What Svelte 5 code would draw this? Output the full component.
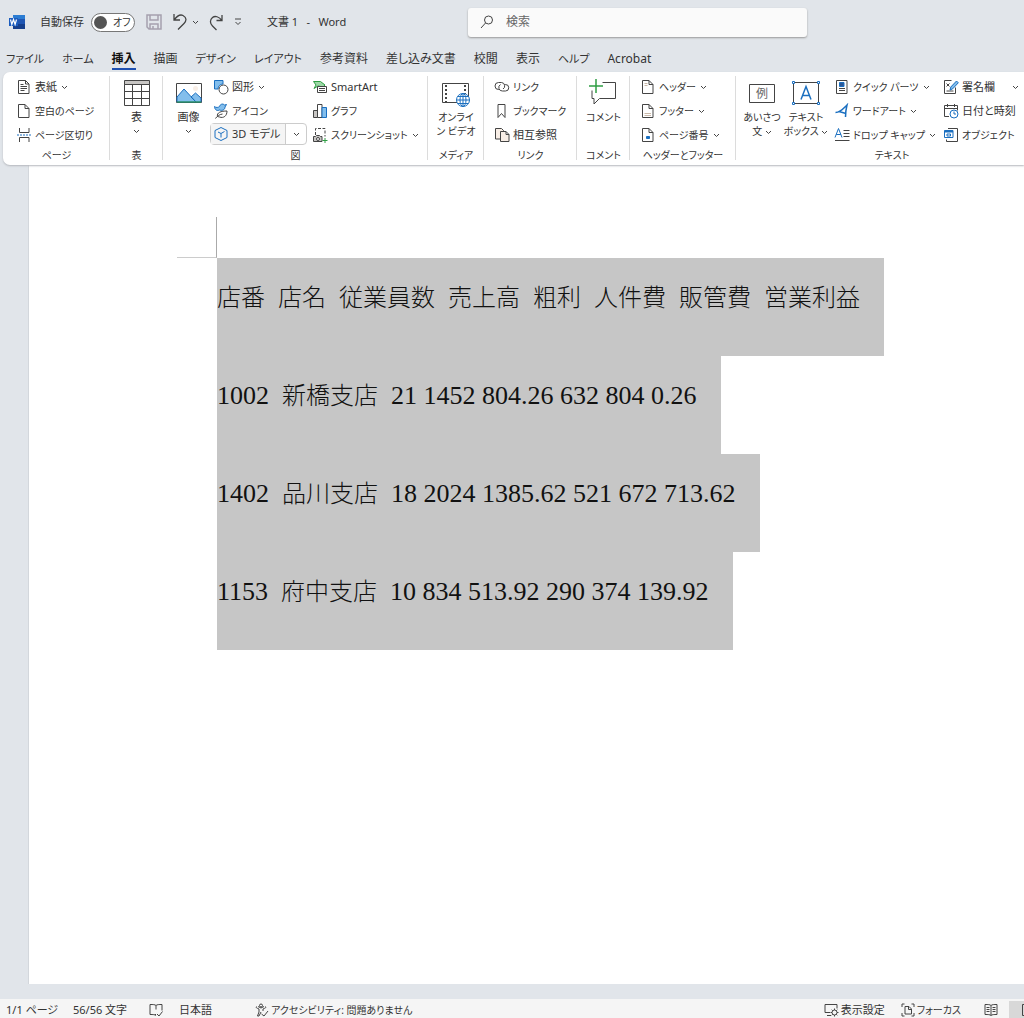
<script lang="ts">
  type Item = { icon: string; label: string; menu?: boolean };

  const tabs = [
    'ファイル', 'ホーム', '挿入', '描画', 'デザイン', 'レイアウト',
    '参考資料', '差し込み文書', '校閲', '表示', 'ヘルプ', 'Acrobat'
  ];
  let active = $state('挿入');
  let autosave = $state(false);

  // katakana labels are set one step smaller than kanji ones
  const isKana = (text: string) => /[ァ-ー]/.test(text);

  const pages: Item[] = [
    { icon: 'cover', label: '表紙', menu: true },
    { icon: 'blank', label: '空白のページ' },
    { icon: 'break', label: 'ページ区切り' }
  ];
  const charts: Item[] = [
    { icon: 'smartart', label: 'SmartArt' },
    { icon: 'chart', label: 'グラフ' },
    { icon: 'screenshot', label: 'スクリーンショット', menu: true }
  ];
  const links: Item[] = [
    { icon: 'link', label: 'リンク' },
    { icon: 'bookmark', label: 'ブックマーク' },
    { icon: 'crossref', label: '相互参照' }
  ];
  const headers: Item[] = [
    { icon: 'header', label: 'ヘッダー', menu: true },
    { icon: 'footer', label: 'フッター', menu: true },
    { icon: 'pagenum', label: 'ページ番号', menu: true }
  ];
  const parts: Item[] = [
    { icon: 'quick', label: 'クイック パーツ', menu: true },
    { icon: 'wordart', label: 'ワードアート', menu: true },
    { icon: 'dropcap', label: 'ドロップ キャップ', menu: true }
  ];
  const stamps: Item[] = [
    { icon: 'sign', label: '署名欄', menu: true },
    { icon: 'date', label: '日付と時刻' },
    { icon: 'object', label: 'オブジェクト' }
  ];

  const heading = ['店番', '店名', '従業員数', '売上高', '粗利', '人件費', '販管費', '営業利益'];
  const rows = [
    ['1002', '新橋支店', '21 1452 804.26 632 804 0.26'],
    ['1402', '品川支店', '18 2024 1385.62 521 672 713.62'],
    ['1153', '府中支店', '10 834 513.92 290 374 139.92']
  ];
</script>

{#snippet chevron()}
  <svg class="chev" width="7" height="5" viewBox="0 0 7 5" aria-hidden="true"><path d="M1 1l2.5 2.5L6 1" /></svg>
{/snippet}

{#snippet icon(name: string)}
  <svg class="ico" width="16" height="16" viewBox="0 0 16 16" aria-hidden="true">
    {#if name === 'cover'}
      <path d="M2.5 1.5h7l3.500 3.500v9.500h-10.500zM9.500 1.500v3.500h3.500" />
      <path d="M4.500 5.500h3M4.500 7.500h6.500M4.500 9.500h6.500M4.500 11.500h4" />
    {:else if name === 'blank'}
      <path d="M2.500 1.500h6.500l4 4v9h-10.500zM9 1.500v4h4" />
    {:else if name === 'break'}
      <path d="M3.500 1v4.500h9.500v-4.500M3.500 15v-4.500h9.500v4.500" />
      <path class="blue" stroke-dasharray="2 1" d="M1 8h14" />
    {:else if name === 'shapes'}
      <path class="blue sky" d="M1.500 1.500h8.500v3.500a5 5 0 0 0-5 5h-3.500z" />
      <circle class="white" cx="10.500" cy="10.500" r="4.500" />
    {:else if name === 'leaf'}
      <path class="blue sky" d="M1.500 3.500c1.500 1.500 4 1 5 0 .5-2 3-3.500 5-1.500l2-.5-1.500 2.500c0 3-3 4-5.500 3-2.500 1.500-5-.5-5-3.500z" />
      <path class="white" d="M4.500 13.500c-1-4 3.500-5.500 9.500-5.500 0 5-3.500 7.500-7.500 6l-2-.5zM2.500 15.500c1.500-2.500 4-4 7-4.500" />
    {:else if name === 'cube'}
      <path class="blue" d="M8 1.500l6 3v7l-6 3-6-3v-7zM5 6l3 1.500 3.500-2M8 7.500v4" />
    {:else if name === 'smartart'}
      <path class="green mint" d="M1.500 2.500h7l4.500 3.500-2 2-5-1-4 2.500 2-3.500z" />
      <path class="white" d="M5.500 7.500h9v6h-9z" /><path d="M7 9.500h6M7 11.500h6" />
    {:else if name === 'chart'}
      <path class="grey" d="M1.500 7.500h4v7h-4z" /><path class="white" d="M5.500 1.500h4.500v13h-4.500z" />
      <path class="blue sky" d="M10 4.500h4.500v10h-4.500z" />
    {:else if name === 'screenshot'}
      <path stroke-dasharray="3 1.500" d="M3.500 8v-6.500h9.500v8" />
      <path class="grey" d="M1.500 9.500h2l1-1h3l1 1h1.500v5h-8.500z" /><circle class="white" cx="6" cy="12" r="1.500" />
      <path class="green" d="M13 11v5M10.500 13.500h5" />
    {:else if name === 'link'}
      <path d="M6 10.500h-1.500a3.500 3.500 0 0 1 0-7h3a3.500 3.500 0 0 1 1.500 6.500M6.500 5.500a3.500 3.500 0 0 0 2 6.500h3a3.200 3.200 0 0 0 0-6.500h-1" />
    {:else if name === 'bookmark'}
      <path d="M4 1.500h7v13l-3.500-4-3.500 4z" />
    {:else if name === 'crossref'}
      <path class="cream" d="M1.500 1.500h6l2 2v8.500h-8z" /><path class="cream" d="M6.500 4.500h5.500l3 3v7h-8.500zM12 4.500v3h3" />
    {:else if name === 'header'}
      <path d="M2.500 1.500h6.500l4 4v9h-10.500zM9 1.500v4h4" /><path class="pale" d="M4.500 4.500h3M4.500 6.500h3" />
    {:else if name === 'footer'}
      <path d="M2.500 1.500h6.500l4 4v9h-10.500zM9 1.500v4h4" /><path class="pale" d="M4.500 10.500h6.500M4.500 12.500h6.500" />
    {:else if name === 'pagenum'}
      <path d="M2.500 1.500h6.500l4 4v9h-10.500zM9 1.500v4h4" />
      <path class="blue" fill="#1a6fc0" d="M6.500 9.500h3v2h-3z" />
    {:else if name === 'quick'}
      <path d="M2.500 1.500h10.500v13h-10.500z" /><path class="blue navy" d="M5.500 3.500h4.500v4h-4.500z" />
      <path d="M5 9.500h6M5 11.500h6" />
    {:else if name === 'wordart'}
      <path class="blue thick" d="M1.500 9.500c5 0 8-4 11.500-7.500-1 4-1.500 8-1.500 12M5 8.500l7 2" />
    {:else if name === 'dropcap'}
      <path class="blue" d="M1 10.500l3.500-9 3.500 9M2.200 7.500h4.600" />
      <path d="M9.500 3.500h6M9.500 6.500h6M9.500 9.500h6M1 13.500h14.500" />
    {:else if name === 'sign'}
      <path d="M8.500 1.500h-7v13h11v-6M3.500 4.500l3 3M6.500 4.500l-3 3M3.500 12h7" />
      <path class="blue sky" d="M7 11l.8-3 5.700-6 1.800 1.800-5.600 6z" />
    {:else if name === 'date'}
      <path d="M6 13.500h-4.500v-11h13v5M1.500 5.500h13M4.500 1v3M11.500 1v3" />
      <circle class="blue white" cx="11" cy="11" r="4" /><path class="blue" d="M11 8.500v2.500h2" />
    {:else if name === 'object'}
      <path d="M5 1.500h9.500v13h-11v-2" /><path class="blue white" d="M1.500 3.500h8.500v7h-8.500z" />
      <path class="blue bold" d="M1.500 4.500h8.500" /><path class="blue" d="M4 7h3.500v2h-3.500z" />
    {/if}
  </svg>
{/snippet}

{#snippet small(item: Item)}
  <button class="small">
    {@render icon(item.icon)}
    <span class:kana={isKana(item.label)}>{item.label}</span>
    {#if item.menu}{@render chevron()}{/if}
  </button>
{/snippet}

{#snippet column(items: Item[], cls = '')}
  <div class="col {cls}">
    {#each items as item (item.label)}{@render small(item)}{/each}
  </div>
{/snippet}

<div class="word">
  <header class="title">
    <svg class="logo" width="16" height="16" viewBox="0 0 16 16" aria-hidden="true">
      <path fill="#2b7cd3" d="M4 1h12v5H4z" /><path fill="#1f56b3" d="M4 5h12v6H4z" /><path fill="#153f8c" d="M4 10h12v5H4z" />
      <path fill="#1b5cbe" d="M0 4h9v8H0z" />
      <path fill="none" stroke="#fff" stroke-width="1.2" d="M1.500 5.500l1.300 5 1.700-5 1.600 5 1.400-5" />
    </svg>
    <label class="auto">
      自動保存
      <span class="switch" class:on={autosave}>
        <input type="checkbox" role="switch" bind:checked={autosave} />
        <i></i>{autosave ? 'オン' : 'オフ'}
      </span>
    </label>
    <div class="quick">
      <button aria-label="上書き保存">
        <svg class="save" width="16" height="16" viewBox="0 0 16 16"><path d="M1 1h14v14H3l-2-2zM4 1v5h8V1M4 15v-5h8v5M7 12v3" /></svg>
      </button>
      <button aria-label="元に戻す" class="undo">
        <svg class="arrow" width="16" height="18" viewBox="0 0 16 18"><path d="M2 1v6h6M2 7c3-4 6-6 9-4.500 4 2 3.500 5.500 1 8L6 16.500" /></svg>
        {@render chevron()}
      </button>
      <button aria-label="やり直し">
        <svg class="arrow" width="15" height="17" viewBox="0 0 15 17"><path d="M13 1v5.500H7.500M13 6.500c-3-4-7-5-9.500-3-3 2.500-2.500 6 0 8.500l4 4" /></svg>
      </button>
      <button aria-label="カスタマイズ">
        <svg width="8" height="8" viewBox="0 0 8 8"><path d="M1 1h6M1.500 4l2.500 2.500L6.500 4" /></svg>
      </button>
    </div>
    <span class="name">文書 1&ensp; -&ensp; Word</span>
    <label class="search">
      <svg width="14" height="14" viewBox="0 0 14 14" aria-hidden="true"><circle cx="8.500" cy="5" r="4" /><path d="M5.500 8L1 13" /></svg>
      <input type="text" placeholder="検索" aria-label="検索" />
    </label>
  </header>

  <nav class="tabs">
    {#each tabs as tab (tab)}
      <button class:active={tab === active} class:kana={isKana(tab)} onclick={() => (active = tab)}>{tab}</button>
    {/each}
  </nav>

  <section class="ribbon">
    <div class="group g-page">
      <div class="tools">{@render column(pages)}</div>
      <h2>ページ</h2>
    </div>

    <div class="group g-table">
      <div class="tools">
        <button class="big">
          <svg width="28" height="28" viewBox="0 0 28 28" aria-hidden="true">
            <path class="grey" d="M1.500 1.500h25v4h-25z" />
            <path d="M1.500 5.500h25v21h-25zM1.500 12.500h25M1.500 19.500h25M9.500 5.500v21M18.500 5.500v21" />
          </svg>
          <span>表</span>
          {@render chevron()}
        </button>
      </div>
      <h2>表</h2>
    </div>

    <div class="group g-figure">
      <div class="tools">
        <button class="big">
          <svg width="28" height="28" viewBox="0 0 28 28" aria-hidden="true">
            <path d="M1.500 4.500h25v19h-25z" />
            <circle class="cream plain" cx="20.500" cy="9.500" r="2.500" />
            <path class="blue sky" d="M2 18l7-8 12 13h-19zM16 18l4.500-4 5.500 5v4h-5z" />
            <path class="green" d="M2 23h24" />
          </svg>
          <span>画像</span>
          {@render chevron()}
        </button>
        <div class="col c-shapes">
          {@render small({ icon: 'shapes', label: '図形', menu: true })}
          {@render small({ icon: 'leaf', label: 'アイコン' })}
          <div class="split">
            {@render small({ icon: 'cube', label: '3D モデル' })}
            <button class="more" aria-label="3D モデルのメニュー">{@render chevron()}</button>
          </div>
        </div>
        {@render column(charts)}
      </div>
      <h2>図</h2>
    </div>

    <div class="group g-media">
      <div class="tools">
        <button class="big">
          <svg width="30" height="28" viewBox="0 0 30 28" aria-hidden="true">
            <path d="M1.500 4.500h26v19h-26z" />
            <path class="bold" stroke-dasharray="2 2" d="M5 6v17M24 6v9" />
            <circle class="blue white" cx="22" cy="21" r="6.500" />
            <path class="blue" d="M15.500 21h13M22 14.500v13M17 17.500h10M17 24.500h10" />
            <ellipse class="blue" cx="22" cy="21" rx="3" ry="6.500" />
          </svg>
          <span class="kana">オンライ<br />ン ビデオ</span>
        </button>
      </div>
      <h2>メディア</h2>
    </div>

    <div class="group g-link">
      <div class="tools">{@render column(links)}</div>
      <h2>リンク</h2>
    </div>

    <div class="group g-comment">
      <div class="tools">
        <button class="big">
          <svg width="28" height="28" viewBox="0 0 28 28" aria-hidden="true">
            <path d="M13.500 3.500h13v16h-16l-5.500 5.500v-5.500h-2v-8" />
            <path class="green thick" d="M7 0v14M0 7h14" />
          </svg>
          <span class="kana">コメント</span>
        </button>
      </div>
      <h2>コメント</h2>
    </div>

    <div class="group g-header">
      <div class="tools">{@render column(headers)}</div>
      <h2>ヘッダーとフッター</h2>
    </div>

    <div class="group g-text">
      <div class="tools">
        <button class="big">
          <svg width="28" height="28" viewBox="0 0 28 28" aria-hidden="true">
            <path d="M1.500 5.500h25v18h-25z" />
            <text x="14" y="19" text-anchor="middle">例</text>
          </svg>
          <span class="kana">あいさつ<br />文 {@render chevron()}</span>
        </button>
        <button class="big">
          <svg width="30" height="28" viewBox="0 0 30 28" aria-hidden="true">
            <path d="M2.500 3.500h25v21h-25z" />
            <path class="blue thick" d="M10 20.500l5-13 5 13M11.500 16.500h7" />
            <path class="blue white" d="M1.500 2.500h2v2h-2zM26.500 2.500h2v2h-2zM1.500 23.500h2v2h-2zM26.500 23.500h2v2h-2z" />
          </svg>
          <span class="kana">テキスト<br />ボックス {@render chevron()}</span>
        </button>
        {@render column(parts, 'c-parts')}
        {@render column(stamps, 'c-stamps')}
      </div>
      <h2>テキスト</h2>
    </div>
  </section>

  <main>
    <article class="page">
      <div class="crop"></div>
      <div class="body">
        <p>{#each heading as cell, i (cell)}{i ? '  ' : ''}<span>{cell}</span>{/each}</p>
        {#each rows as [id, shop, figures] (id)}
          <p>{id}{'  '}<span>{shop}</span>{'  '}{figures}</p>
        {/each}
      </div>
    </article>
  </main>

  <footer>
    <span class="s-page">1/1 ページ</span>
    <span class="s-count">56/56 文字</span>
    <svg width="14" height="14" viewBox="0 0 14 14" aria-hidden="true">
      <path d="M7 12.500c-1-1-3-1-6-1v-10c3 0 5 0 6 1 1-1 3-1 6-1v6M7 2.500v4M6 11.500h1M8 11l2 2 3.500-4.500" />
    </svg>
    <span class="s-lang">日本語</span>
    <button class="s-access kana">
      <svg width="14" height="14" viewBox="0 0 14 14" aria-hidden="true">
        <circle cx="6" cy="2.500" r="1.500" />
        <path d="M1.500 3.500c-1 1 0 1.500 2.500 2.500v3l-1.500 4h1.500l2-4M10.500 3.500c1 1 0 1.500-2.500 2.500v2M3 3.500l3 1.500 3-1.500M6.500 11l2.500 2 4-5" />
      </svg>
      アクセシビリティ: 問題ありません
    </button>
    <button class="s-view">
      <svg width="15" height="14" viewBox="0 0 15 14" aria-hidden="true">
        <path d="M6 9.500h-5v-8h12v4M3 12.500h4" />
        <circle cx="10.500" cy="9.500" r="2.500" /><path d="M10.500 5.500v1.500M10.500 12v1.500M6.500 9.500h1.500M13 9.500h1.500M7.700 6.700l1 1M13.300 12.300l-1-1M13.300 6.700l-1 1M7.700 12.300l1-1" />
      </svg>
      表示設定
    </button>
    <button class="s-focus kana">
      <svg width="14" height="14" viewBox="0 0 14 14" aria-hidden="true">
        <path d="M1 4v-3h2.500M10.500 1h2.500v3M13 10v3h-2.500M3.500 13h-2.500v-3M4 3.500h4l2.500 2.500v5h-6.500zM7.500 3.500v3h3" />
      </svg>
      フォーカス
    </button>
    <button class="s-read" aria-label="閲覧モード">
      <svg width="14" height="14" viewBox="0 0 14 14" aria-hidden="true">
        <path d="M7 12.500c-1-1-3-1-6-1v-10c3 0 5 0 6 1 1-1 3-1 6-1v10c-3 0-5 0-6 1zM7 2.500v10M2.500 4.500h3M2.500 6.500h3M2.500 8.500h3M8.500 4.500h3M8.500 6.500h3M8.500 8.500h3" />
      </svg>
    </button>
    <button class="s-layout" aria-label="印刷レイアウト">
      <svg width="14" height="14" viewBox="0 0 14 14" aria-hidden="true"><path d="M1.500 1.500h11v11h-11zM4 4.500h6M4 7.500h6" /></svg>
    </button>
  </footer>
</div>

<style>
  :global(body) {
    margin: 0;
  }

  .word {
    display: flex;
    flex-direction: column;
    min-height: 100vh;
    overflow: hidden;
    background: #e1e5ea;
    color: #333;
    font: 11px/16px "Noto Sans", "Noto Sans CJK JP", sans-serif;
    font-feature-settings: "palt";
  }

  button {
    display: flex;
    align-items: center;
    padding: 0;
    border: 0;
    background: none;
    color: inherit;
    font: inherit;
    font-feature-settings: inherit;
    white-space: nowrap;
  }

  svg {
    flex: none;
    fill: none;
    stroke: #444;
    stroke-width: 1;
  }

  .kana { font-size: 10px; }
  .bold { stroke-width: 2; }
  .thick { stroke-width: 1.5; }
  .blue { stroke: #1a6fc0; }
  .green { stroke: #2f9e44; }
  .sky { fill: #83beec; }
  .navy { fill: #2b5797; }
  .mint { fill: #9bd8a5; }
  .grey { fill: #c8c6c4; }
  .white { fill: #fff; }
  .cream { fill: #f8eee6; }
  .pale { stroke: #c9b8a8; }
  .plain { stroke: none; }

  .title {
    display: flex;
    align-items: center;
    height: 44px;
    padding-left: 9px;
  }

  .logo {
    stroke: none;
  }

  .auto {
    display: flex;
    align-items: center;
    gap: 7px;
    margin-left: 15px;
    white-space: nowrap;
  }

  .switch {
    display: flex;
    align-items: center;
    gap: 6px;
    box-sizing: border-box;
    width: 44px;
    height: 19px;
    padding: 0 2px;
    border: 1px solid #777;
    border-radius: 10px;
    background: #fff;
    font-size: 10px;
  }

  .switch.on {
    background: #cfe0f7;
  }

  .switch input {
    position: absolute;
    opacity: 0;
  }

  .switch i {
    flex: none;
    width: 13px;
    height: 13px;
    border-radius: 50%;
    background: #555;
  }

  .quick {
    display: flex;
    align-items: center;
    gap: 10px;
    margin-left: 11px;
  }

  .save {
    stroke: #a5a0ae;
    stroke-width: 1.5;
  }

  .arrow {
    stroke-width: 1.3;
  }

  .undo {
    gap: 4px;
  }

  .name {
    width: 180px;
    margin-left: 25px;
  }

  .search {
    display: flex;
    align-items: center;
    gap: 10px;
    box-sizing: border-box;
    width: 339px;
    height: 29px;
    margin-left: 21px;
    padding: 0 12px;
    border-radius: 3px;
    background: #fafafa;
    box-shadow: 0 1px 2px #999;
  }

  .search input {
    flex: 1;
    min-width: 0;
    border: 0;
    outline: 0;
    background: none;
    font: 12px/16px "Noto Sans", "Noto Sans CJK JP", sans-serif;
  }

  .search input::placeholder {
    color: #666;
  }

  .tabs {
    display: flex;
    gap: 18px;
    height: 28px;
    padding-left: 6px;
    font-size: 12px;
  }

  .tabs button {
    align-self: flex-start;
    height: 26px;
    box-sizing: border-box;
    padding-top: 5px;
    border-bottom: 2px solid transparent;
  }

  .tabs .kana {
    font-size: 11px;
  }

  .tabs .active {
    border-color: #1d4fb0;
    color: #111;
    font-weight: 700;
  }

  .ribbon {
    display: flex;
    height: 93px;
    margin-left: 3px;
    border-radius: 7px 0 0 7px;
    background: #fff;
    box-shadow: 0 1px 2px #b5b8bd;
    z-index: 1;
  }

  .group {
    display: flex;
    flex: none;
    flex-direction: column;
    position: relative;
    box-sizing: border-box;
    padding-top: 3px;
  }

  .group::after {
    content: '';
    position: absolute;
    top: 4px;
    right: 0;
    bottom: 5px;
    border-right: 1px solid #dcdcdc;
  }

  .g-page { width: 107px; }
  .g-table { width: 53px; }
  .g-figure { width: 265px; }
  .g-media { width: 56px; }
  .g-link { width: 93px; }
  .g-comment { width: 53px; }
  .g-header { width: 106px; }
  .g-text { width: 312px; }

  .g-page .tools { padding-left: 13px; }
  .g-link .tools { padding-left: 10px; }
  .g-header .tools { padding-left: 10px; }
  .g-text .tools { padding-left: 4px; }

  h2 {
    margin: 0;
    font-size: 10px;
    font-weight: 400;
    line-height: 16px;
    text-align: center;
  }

  .tools {
    display: flex;
    height: 72px;
  }

  .g-table .tools,
  .g-media .tools,
  .g-comment .tools {
    justify-content: center;
  }

  .col {
    display: flex;
    flex-direction: column;
    flex: none;
  }

  .c-shapes { width: 102px; }
  .c-parts { width: 115px; padding-left: 6px; box-sizing: border-box; }
  .c-stamps { width: 76px; }

  .c-stamps .small:first-child .chev {
    margin-left: 14px;
  }

  .small {
    gap: 3px;
    height: 24px;
  }

  .small .chev {
    margin-left: 1px;
  }

  .c-shapes > .small {
    padding-left: 3px;
  }

  .split {
    display: flex;
    width: 97px;
    height: 22px;
    box-sizing: border-box;
    border: 1px solid #ccc;
    border-radius: 4px;
  }

  .split .small {
    flex: 1;
    height: 20px;
    padding-left: 2px;
    background: #f5f5f5;
  }

  .split .kana {
    font-size: 11px;
  }

  .more {
    justify-content: center;
    width: 21px;
    border-left: 1px solid #ccc;
  }

  .big {
    flex-direction: column;
    padding-top: 4px;
    line-height: 14px;
  }

  .big > span {
    padding-top: 3px;
    text-align: center;
  }

  .big > .chev {
    margin-top: 5px;
  }

  .big span .chev {
    vertical-align: middle;
  }

  .big text {
    fill: #666;
    stroke: none;
    font-size: 12px;
  }

  .g-figure .big {
    width: 47px;
    padding-left: 4px;
  }

  .g-text .big {
    width: 44px;
  }

  main {
    display: flex;
    flex: 1;
    padding: 0 0 15px 28px;
  }

  .page {
    flex: 1;
    border-left: 1px solid #d3d7dc;
    background: #fff;
  }

  .crop {
    width: 39px;
    height: 40px;
    margin: 52px 0 0 148px;
    border-right: 1px solid #aaa;
    border-bottom: 1px solid #ccc;
  }

  .body {
    display: flex;
    flex-direction: column;
    align-items: flex-start;
    margin-left: 188px;
    color: #111;
    font: 300 26px/80px "Liberation Serif", "Noto Sans CJK JP", serif;
    font-feature-settings: normal;
  }

  .body p {
    height: 98px;
    margin: 0;
    padding-right: 24px;
    background: #c6c6c6;
    white-space: pre;
  }

  .body span {
    font-size: 24px;
  }

  footer {
    display: flex;
    align-items: center;
    height: 19px;
    padding: 3px 0 0 6px;
    box-sizing: border-box;
    background: #f5f5f5;
    white-space: nowrap;
  }

  .s-page { width: 67px; }
  .s-count { width: 76px; }
  .s-lang { width: 76px; margin-left: 16px; }

  .s-access,
  .s-view,
  .s-focus {
    gap: 2px;
  }

  .s-view {
    margin-left: auto;
  }

  .s-focus {
    margin-left: 16px;
  }

  .s-read {
    margin-left: 23px;
  }

  .s-layout {
    width: 15px;
    height: 18px;
    margin-left: 11px;
    padding-left: 12px;
    box-sizing: border-box;
    overflow: hidden;
    background: #d8d8d8;
  }
</style>
